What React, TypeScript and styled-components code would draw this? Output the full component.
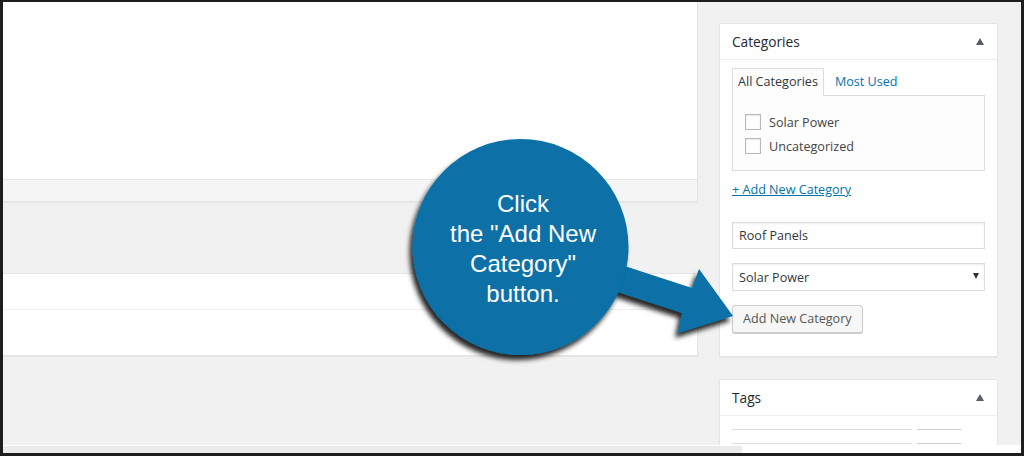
import { FC } from 'react';

// Third parties
import styled, { createGlobalStyle } from 'styled-components';

const GlobalStyle = createGlobalStyle`
  html, body {
    margin: 0;
    padding: 0;
    overflow: hidden;
  }
  * {
    box-sizing: border-box;
  }
`;

const wpBlue = '#0073aa';
const calloutBlue = '#0771a8';

const App: FC = () => (
  <Frame>
    <GlobalStyle />
    <Screen>
      <Workspace>
        <Main>
          <EditorPanel>
            <EditorBody />
            <EditorFooter />
          </EditorPanel>
          <ListPanel>
            <ListRow $height={35} />
            <ListRow $height={46} />
          </ListPanel>
        </Main>

        <Sidebar>
          <Box>
            <BoxHeader>
              <span>Categories</span>
              <Toggle />
            </BoxHeader>
            <CategoryBody>
              <Tabs>
                <Tab $active>All Categories</Tab>
                <Tab>Most Used</Tab>
              </Tabs>
              <TabPanel>
                <CheckRow>
                  <Checkbox />
                  Solar Power
                </CheckRow>
                <CheckRow>
                  <Checkbox />
                  Uncategorized
                </CheckRow>
              </TabPanel>
              <AddLink>+ Add New Category</AddLink>
              <TextField>Roof Panels</TextField>
              <SelectField>
                Solar Power
                <SelectArrow />
              </SelectField>
              <Button>Add New Category</Button>
            </CategoryBody>
          </Box>

          <Box>
            <BoxHeader>
              <span>Tags</span>
              <Toggle />
            </BoxHeader>
            <TagsBody>
              <TagRow>
                <TagField />
                <TagButton />
              </TagRow>
              <TagRow>
                <TagField />
                <TagButton />
              </TagRow>
            </TagsBody>
          </Box>
        </Sidebar>
      </Workspace>
      <ScrollStrip />
    </Screen>

    <Callout>
      <svg width="1024" height="456" viewBox="0 0 1024 456">
        <defs>
          <filter id="callout-shadow" x="-20%" y="-20%" width="140%" height="140%">
            <feDropShadow dx="-3" dy="5" stdDeviation="2.5" floodColor="#000" floodOpacity="0.85" />
          </filter>
        </defs>
        <g filter="url(#callout-shadow)" fill={calloutBlue}>
          <polygon points="600,258 692,288 699,269 733,316 678,333 682,313 590,283" />
          <circle cx="520.5" cy="247" r="108" />
        </g>
      </svg>
      <CalloutText>
        Click
        <br />
        the "Add New
        <br />
        Category"
        <br />
        button.
      </CalloutText>
    </Callout>
  </Frame>
);

export default App;

const Frame = styled.div`
  position: relative;
  width: 1024px;
  height: 456px;
  padding: 2px 3px 3px 3px;
  background: #1d1d1d;
`;

const Screen = styled.div`
  height: 100%;
  display: grid;
  grid-template-rows: 1fr 8px;
  background: #f1f1f1;
  font-family: 'Open Sans', 'Noto Sans', sans-serif;
  font-size: 12.6px;
  color: #444;
`;

const Workspace = styled.div`
  display: grid;
  grid-template-columns: 695px 279px;
  column-gap: 21px;
  overflow: hidden;
`;

const Main = styled.div`
  display: flex;
  flex-direction: column;
  gap: 71px;
`;

const EditorPanel = styled.div`
  display: flex;
  flex-direction: column;
  background: #fff;
  border-right: 1px solid #e5e5e5;
  border-bottom: 1px solid #e5e5e5;
  box-shadow: 0 1px 1px rgba(0, 0, 0, 0.04);
`;

const EditorBody = styled.div`
  height: 177px;
`;

const EditorFooter = styled.div`
  height: 22px;
  background: #f5f5f5;
  border-top: 1px solid #e5e5e5;
`;

const ListPanel = styled.div`
  background: #fff;
  border: 1px solid #e5e5e5;
  border-left: none;
  box-shadow: 0 1px 1px rgba(0, 0, 0, 0.04);
`;

const ListRow = styled.div<{ $height: number }>`
  height: ${({ $height }) => $height}px;

  & + & {
    border-top: 1px solid #eee;
  }
`;

const Sidebar = styled.aside`
  display: flex;
  flex-direction: column;
  gap: 22px;
  padding-top: 21px;
`;

const Box = styled.section`
  background: #fff;
  border: 1px solid #e5e5e5;
  box-shadow: 0 1px 1px rgba(0, 0, 0, 0.04);
`;

const BoxHeader = styled.div`
  display: flex;
  align-items: center;
  justify-content: space-between;
  height: 36px;
  padding: 0 13px 1px 12px;
  border-bottom: 1px solid #eee;
  font-size: 13.7px;
  color: #23282d;
`;

const Toggle = styled.i`
  width: 0;
  height: 0;
  border-left: 4px solid transparent;
  border-right: 4px solid transparent;
  border-bottom: 7px solid #555d66;
`;

const CategoryBody = styled.div`
  display: flex;
  flex-direction: column;
  align-items: flex-start;
  padding: 8px 12px 23px;
`;

const Tabs = styled.div`
  display: flex;
  gap: 5px;
  margin-bottom: -1px;
  position: relative;
`;

const Tab = styled.div<{ $active?: boolean }>`
  padding: 3px 5px 5px;
  line-height: 19px;
  border: 1px solid ${({ $active }) => ($active ? '#ddd' : 'transparent')};
  border-bottom: none;
  background: ${({ $active }) => ($active ? '#fdfdfd' : 'transparent')};
  color: ${({ $active }) => ($active ? '#32373c' : wpBlue)};
`;

const TabPanel = styled.div`
  align-self: stretch;
  padding: 14px 12px 12px;
  background: #fdfdfd;
  border: 1px solid #ddd;
`;

const CheckRow = styled.label`
  display: flex;
  align-items: center;
  gap: 8px;
  height: 24px;
  color: #444;
`;

const Checkbox = styled.span`
  width: 16px;
  height: 16px;
  background: #fff;
  border: 1px solid #b4b9be;
  box-shadow: inset 0 1px 2px rgba(0, 0, 0, 0.1);
`;

const AddLink = styled.a`
  margin-top: 9px;
  line-height: 20px;
  color: ${wpBlue};
  text-decoration: underline;
`;

const TextField = styled.div`
  align-self: stretch;
  display: flex;
  align-items: center;
  height: 27px;
  margin-top: 22px;
  padding: 0 6px;
  background: #fff;
  border: 1px solid #ddd;
  box-shadow: inset 0 1px 2px rgba(0, 0, 0, 0.07);
  color: #32373c;
`;

const SelectField = styled(TextField)`
  justify-content: space-between;
  height: 28px;
  margin-top: 14px;
  padding-right: 5px;
`;

const SelectArrow = styled.i`
  width: 0;
  height: 0;
  border-left: 3px solid transparent;
  border-right: 3px solid transparent;
  border-top: 6px solid #333;
  margin-top: -2px;
`;

const Button = styled.button`
  height: 28px;
  margin-top: 14px;
  padding: 0 10px 1px;
  background: #f7f7f7;
  border: 1px solid #ccc;
  border-radius: 3px;
  box-shadow: 0 1px 0 #ccc;
  color: #555;
  font-family: inherit;
  font-size: 12.6px;
`;

const TagsBody = styled.div`
  padding: 13px 12px 0;
`;

const TagRow = styled.div`
  display: flex;
  gap: 5px;
  height: 14px;
`;

const TagField = styled.div`
  width: 180px;
  border-top: 1px solid #ddd;
`;

const TagButton = styled.div`
  width: 44px;
  border-top: 1px solid #ccc;
`;

const ScrollStrip = styled.div`
  border-top: 1px solid #fff;
  background: linear-gradient(to right, #ebebeb 739px, #fff 739px);
`;

const Callout = styled.div`
  position: absolute;
  left: 0;
  top: 0;
  width: 1024px;
  height: 456px;
  pointer-events: none;

  svg {
    display: block;
  }
`;

const CalloutText = styled.p`
  position: absolute;
  left: 415px;
  top: 189px;
  width: 216px;
  margin: 0;
  text-align: center;
  font-family: 'Liberation Sans', Arial, sans-serif;
  font-size: 24px;
  line-height: 30px;
  color: #fff;
`;
